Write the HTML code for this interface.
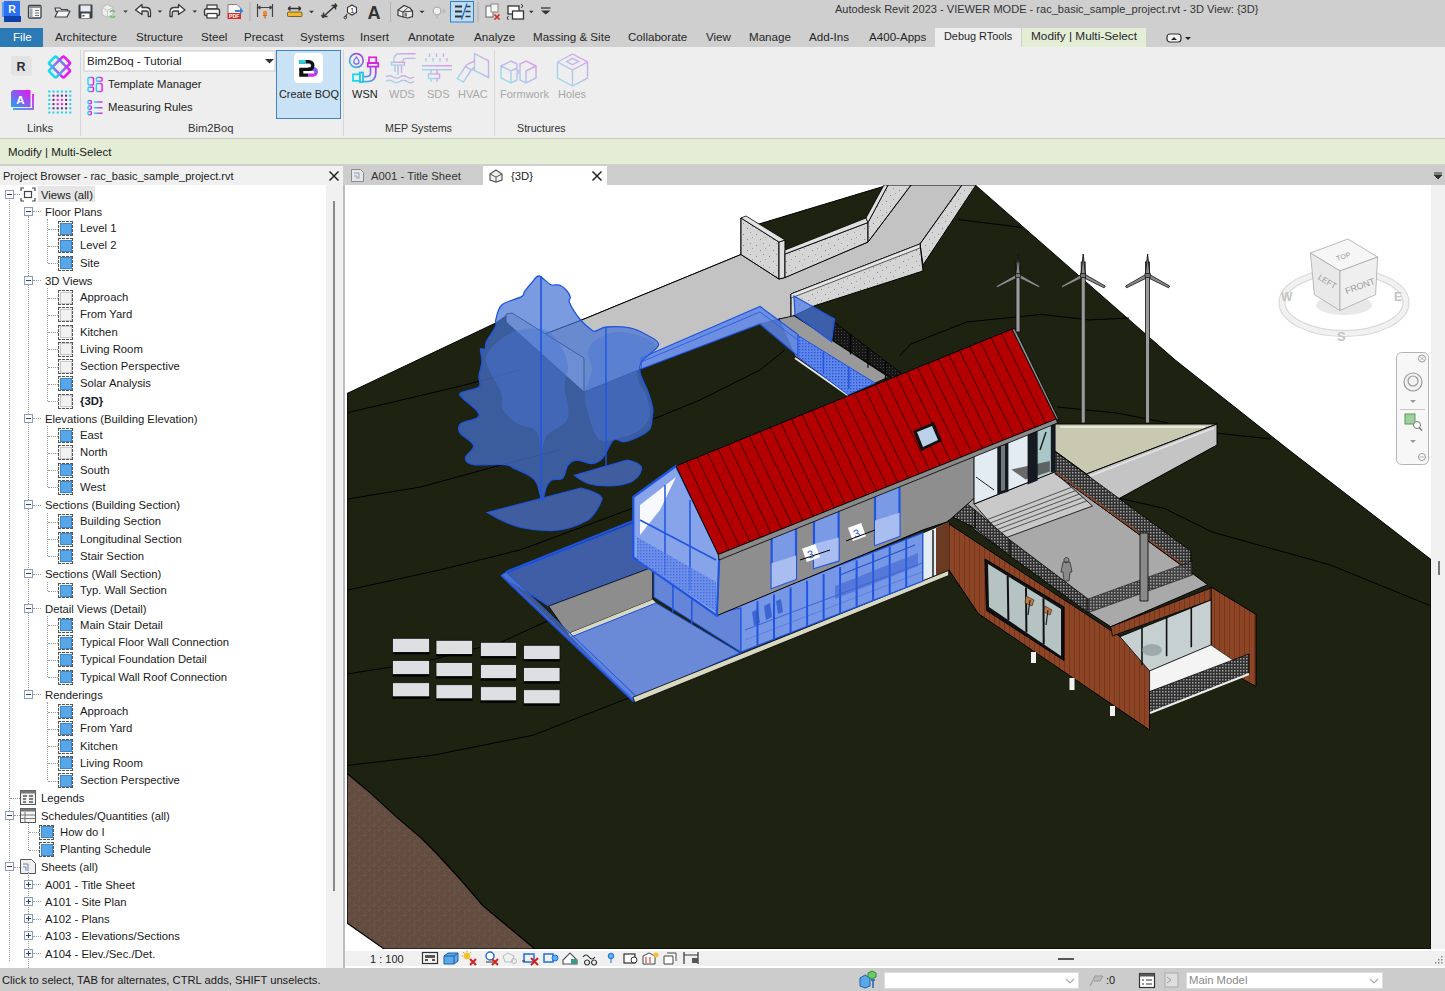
<!DOCTYPE html>
<html><head><meta charset="utf-8">
<style>
*{margin:0;padding:0;box-sizing:border-box}
html,body{width:1445px;height:991px;overflow:hidden;background:#cfcfcf;font-family:"Liberation Sans",sans-serif;font-size:11.3px;color:#1e1e1e}
.a{position:absolute;white-space:nowrap}
#title{left:0;top:0;width:1445px;height:28px;background:#cfcfcf}
#tabs{left:0;top:28px;width:1445px;height:19px;background:#cfcfcf}
.tab{position:absolute;top:29px;font-size:11.6px;color:#262626;line-height:15px}
#ribbon{left:0;top:47px;width:1445px;height:91px;background:#eeeeee}
#ctx{left:0;top:138px;width:1445px;height:26px;background:#e4eed7;border-top:1px solid #c6cbc0}
#pbhead{left:0;top:166px;width:343px;height:19px;background:#f0f0f0}
#pbtree{left:0;top:185px;width:326px;height:783px;background:#fff;overflow:hidden}
#pbscroll{left:326px;top:185px;width:17px;height:783px;background:#f0f0f0}
#vtabs{left:345px;top:166px;width:1100px;height:19px;background:#cdcdcd}
#vscroll{left:1431px;top:185px;width:14px;height:764px;background:#f0f0f0}
#vbar{left:345px;top:949px;width:1100px;height:19px;background:#f0f0f0;border-top:2px solid #fff;border-bottom:2px solid #fff}
#status{left:0;top:968px;width:1445px;height:23px;background:#cccccc;border-top:0}
.r{position:absolute;height:16px;line-height:16px;font-size:11.3px;color:#1a1a1a;white-space:nowrap}
.sep{position:absolute;top:50px;width:1px;height:86px;background:#d6d6d6}
.plab{position:absolute;top:121px;font-size:11.2px;color:#333;line-height:14px}
.btxt{position:absolute;top:87px;font-size:11px;line-height:14px;color:#222}
.dim{color:#a8a8a8}
.ln{position:absolute;border-left:1px dotted #9a9a9a}
.lh{position:absolute;border-top:1px dotted #9a9a9a}
.vw{position:absolute;width:15px;height:15px;border:1px dashed #555;background:#f4f4f4}
.vw.b::after{content:"";position:absolute;left:0.5px;top:0.5px;width:10px;height:10px;background:#57a6e8;border:1px solid #3f87c7}
.vw.e::after{content:"";position:absolute;left:0.5px;top:0.5px;width:10px;height:10px;background:#f2f2f2;border:1px solid #c9c9c9}
.ex{position:absolute;z-index:2;width:9px;height:9px;border:1px solid #8b9bbd;background:#fff}
.ex::before{content:"";position:absolute;left:1px;top:3px;width:5px;height:1px;background:#2b3f8f}
.ex.p::after{content:"";position:absolute;left:3px;top:1px;width:1px;height:5px;background:#2b3f8f}
</style></head><body>
<!-- Title bar -->
<div class="a" id="title"></div>
<svg class="a" style="left:0;top:0" width="330" height="28" viewBox="0 0 330 28">
 <rect x="2" y="2" width="3" height="15" fill="#5c9af5"/><rect x="4" y="1" width="16" height="16" fill="#2a70f0"/><rect x="4" y="16" width="17" height="6" fill="#0f41aa"/>
 <text x="8.2" y="12.8" font-family="Liberation Sans" font-weight="bold" font-size="10.5" fill="#fff">R</text>
 <rect x="28.5" y="5.5" width="12.5" height="12.5" rx="1" fill="#f4f4f4" stroke="#3a3f48" stroke-width="1.3"/><rect x="29" y="6" width="11.5" height="2" fill="#8a9098"/><rect x="29.5" y="8.5" width="3" height="9" fill="#a0a6ae"/><path d="M35 10.5 h4 M35 13 h4 M35 15.5 h4" stroke="#666" stroke-width="0.9"/>
 <path d="M55 8 h5 l1.5 1.5 h6 v2 h-11.5z" fill="#e8e8e8" stroke="#3a3f48" stroke-width="1.1"/><path d="M55 17 l3 -6 h12 l-3 6z" fill="#f4f4f4" stroke="#3a3f48" stroke-width="1.2" stroke-linejoin="round"/>
 <rect x="78.5" y="4.5" width="14" height="14" rx="1" fill="#3a4048"/><rect x="80.5" y="5.5" width="10" height="6" fill="#e8ecf0"/><rect x="81.5" y="13.5" width="8" height="4.5" fill="#fff"/><rect x="82.5" y="15" width="2" height="1.5" fill="#3a4048"/>
 <path d="M102 7.5 l5.5 -3 l5.5 3 v7 l-5.5 3 l-5.5 -3z" fill="#eeeeee" stroke="#b8b8b8" stroke-width="1"/><path d="M102 7.5 l5.5 3 l5.5 -3 M107.5 10.5 v7" stroke="#c4c4c4" fill="none"/><path d="M110 12 a3 3 0 0 1 5 0 M115 16 a3 3 0 0 1 -5 0" fill="none" stroke="#6ac46a" stroke-width="1.6"/>
 <path d="M123.3 10.5 h4.5 l-2.25 2.2z" fill="#333"/>
 <path d="M135.5 10 l6.5 -5.5 v3 h4 q4.5 0 4.5 4.5 v4.5 h-2.2 v-3.5 q0 -2 -2 -2 h-4.3 v3.5z" fill="#f4f4f4" stroke="#3a3a3a" stroke-width="1.3" stroke-linejoin="round"/>
 <path d="M157.6 10.5 h4.5 l-2.25 2.2z" fill="#333"/>
 <path d="M185 10 l-6.5 -5.5 v3 h-4 q-4.5 0 -4.5 4.5 v4.5 h2.2 v-3.5 q0 -2 2 -2 h4.3 v3.5z" fill="#f4f4f4" stroke="#3a3a3a" stroke-width="1.3" stroke-linejoin="round"/>
 <path d="M192.5 10.5 h4.5 l-2.25 2.2z" fill="#333"/>
 <rect x="207" y="5" width="10" height="4" fill="#f4f4f4" stroke="#3a3a3a" stroke-width="1.2"/><rect x="204.5" y="9" width="15" height="6.5" rx="1.5" fill="#f4f4f4" stroke="#3a3a3a" stroke-width="1.4"/><rect x="207" y="13.5" width="10" height="4.5" fill="#fff" stroke="#3a3a3a" stroke-width="1.2"/>
 <path d="M228 4.5 h9 l4 4 v5 h-13z" fill="#f6f6f6" stroke="#777" stroke-width="0.9"/><rect x="227.5" y="13" width="13.5" height="6" fill="#d62a22"/><text x="229" y="18.3" font-family="Liberation Sans" font-weight="bold" font-size="5.2" fill="#fff">PDF</text><path d="M235 10 h5 v-2 l3.5 3 l-3.5 3 v-2 h-5z" fill="#2f86e0"/>
 <line x1="250" y1="2" x2="250" y2="21" stroke="#b0b0b0"/>
 <path d="M257.5 4 v13 M272.5 4 v13 M258 7.5 h14 M258 7.5 l2.5 -1.5 M258 7.5 l2.5 1.5 M272 7.5 l-2.5 -1.5 M272 7.5 l-2.5 1.5" stroke="#444" stroke-width="1.2" fill="none"/><circle cx="265" cy="13" r="2.2" fill="#f08a24"/><path d="M263 15.5 h4 M265 15.5 v3" stroke="#d0601a" stroke-width="1.2"/>
</svg>
<svg class="a" style="left:280px;top:0" width="280" height="28" viewBox="280 0 280 28">
 <path d="M288 8.5 h13 M288 8.5 l2.5 -2 M288 8.5 l2.5 2 M301 8.5 l-2.5 -2 M301 8.5 l-2.5 2" stroke="#333" stroke-width="1.3" fill="none"/><rect x="287.5" y="12" width="14.5" height="4.5" rx="1" fill="#f2b829" stroke="#5a4a20" stroke-width="0.8"/>
 <path d="M309 10.7 h5 l-2.5 2.6z" fill="#333"/>
 <path d="M323.5 16.5 l12 -11 M323.5 16.5 v-4 M323.5 16.5 h4 M335.5 5.5 v4 M335.5 5.5 h-4 M321.5 15 l2 3 M335 3.5 l2 3" stroke="#333" stroke-width="1.4" fill="none"/>
 <path d="M352 5 l4.5 2.5 v5 l-4.5 2.5 l-4.5 -2.5 v-5z" fill="#f6f6f6" stroke="#333" stroke-width="1.1"/><text x="350.3" y="13" font-family="Liberation Sans" font-size="7" fill="#222">1</text><path d="M347 14 l-1.5 3" stroke="#333" stroke-width="1.1"/><circle cx="345.3" cy="17.5" r="1.3" fill="none" stroke="#333"/>
 <text x="367.5" y="18.5" font-size="18" font-weight="bold" font-family="Liberation Sans" fill="#333">A</text>
 <line x1="390.5" y1="2" x2="390.5" y2="22" stroke="#b0b0b0"/>
 <path d="M398 10 l6 -4.5 l6 2.5 l2.5 3 v5.5 l-5 1.5 l-9.5 -2.5z" fill="#eaeaea" stroke="#3a3a3a" stroke-width="1.2"/><path d="M398 10 l5 2 l4.5 -4 M403 12 v5.5 M403 12 l9.5 -1" stroke="#3a3a3a" stroke-width="1" fill="none"/><rect x="404.5" y="13" width="2.5" height="3.5" fill="#777"/>
 <path d="M419.5 10.7 h5 l-2.5 2.6z" fill="#333"/>
 <circle cx="437" cy="11" r="3.8" fill="#f0f0f0" stroke="#b0b0b0" stroke-width="1.3"/><path d="M441 11 h4 l-2 -2.5 M445 11 l-2 2.5 M437 15 v4" stroke="#b8b8b8" stroke-width="1.2" fill="none"/>
 <rect x="450.5" y="1.5" width="23" height="20.5" fill="#bcdcf4" stroke="#2f7fd0"/><path d="M455 6.5 h7 M455 11.5 h7 M455 16.5 h7" stroke="#333" stroke-width="2"/><path d="M465.5 6.5 h5 M465.5 11.5 h5 M465.5 16.5 h5" stroke="#333" stroke-width="1.3"/><path d="M461.5 19.5 l5.5 -16" stroke="#2a72d0" stroke-width="1.4"/>
 <line x1="478" y1="2" x2="478" y2="22" stroke="#b0b0b0"/>
 <rect x="486" y="6" width="7" height="11" fill="#fff" stroke="#666"/><rect x="491" y="4" width="7" height="8" fill="#f4f4f4" stroke="#888"/><path d="M494.5 14.5 l5 5 M499.5 14.5 l-5 5" stroke="#d62a2a" stroke-width="1.7"/>
 <rect x="508" y="6" width="11" height="8" fill="#fff" stroke="#333" stroke-width="1.3"/><rect x="512.5" y="11" width="11" height="8" fill="#fff" stroke="#333" stroke-width="1.3"/><path d="M521 4 l2 2 l-2 2 M508.5 16 l-1.5 2 l1.5 2" stroke="#333" fill="none"/>
 <path d="M529 10.7 h4.5 l-2.25 2.6z" fill="#333"/>
 <path d="M541 8 h9.5" stroke="#333" stroke-width="1.3"/><path d="M541 10.5 h9.5 l-4.75 4z" fill="#333"/>
</svg>
<div class="a" style="left:835px;top:2px;font-size:11.05px;color:#333;line-height:14px">Autodesk Revit 2023 - VIEWER MODE - rac_basic_sample_project.rvt - 3D View: {3D}</div>

<!-- Tabs -->
<div class="a" style="left:0;top:28px;width:43px;height:19px;background:#2b79b5"></div>
<div class="a tab" style="left:13px;color:#fff">File</div>
<div class="a" style="left:935px;top:28px;width:86px;height:19px;background:#eeeeee"></div>
<div class="a" style="left:1022px;top:28px;width:124px;height:19px;background:#e4eed7"></div>
<div class="a tab" style="left:55px">Architecture</div>
<div class="a tab" style="left:136px">Structure</div>
<div class="a tab" style="left:201px">Steel</div>
<div class="a tab" style="left:244px">Precast</div>
<div class="a tab" style="left:300px">Systems</div>
<div class="a tab" style="left:360px">Insert</div>
<div class="a tab" style="left:408px">Annotate</div>
<div class="a tab" style="left:474px">Analyze</div>
<div class="a tab" style="left:533px">Massing &amp; Site</div>
<div class="a tab" style="left:628px">Collaborate</div>
<div class="a tab" style="left:706px">View</div>
<div class="a tab" style="left:749px">Manage</div>
<div class="a tab" style="left:809px">Add-Ins</div>
<div class="a tab" style="left:869px">A400-Apps</div>
<div class="a tab" style="left:944px;font-size:10.9px">Debug RTools</div>
<div class="a tab" style="left:1031px;font-size:11.8px">Modify | Multi-Select</div>
<svg class="a" style="left:1165px;top:30px" width="30" height="16" viewBox="0 0 30 16"><rect x="2" y="4" width="14" height="8" rx="3" fill="#f4f4f4" stroke="#333" stroke-width="1.2"/><path d="M6 10 l3 -3 l3 3z" fill="#222"/><path d="M20 7 l3 3 l3 -3z" fill="#222"/></svg>

<!-- Ribbon -->
<div class="a" id="ribbon"></div>
<svg class="a" style="left:0;top:47px" width="600" height="90" viewBox="0 47 600 90">
 <rect x="12" y="57.5" width="20" height="18.5" rx="1" fill="#e6e6e6"/><rect x="11" y="56" width="20" height="18" rx="1" fill="#e3e3e3"/><text x="16.5" y="70.5" font-family="Liberation Sans" font-weight="bold" font-size="12.5" fill="#2a2e36">R</text>
 <defs>
  <linearGradient id="g1" x1="0" y1="1" x2="1" y2="0"><stop offset="0" stop-color="#1fd0e8"/><stop offset="1" stop-color="#c22de0"/></linearGradient>
  <linearGradient id="g1h" x1="0" y1="0" x2="1" y2="0"><stop offset="0" stop-color="#10e0f0"/><stop offset="1" stop-color="#f010f0"/></linearGradient>
  <linearGradient id="g2" x1="0" y1="1" x2="1" y2="0"><stop offset="0" stop-color="#20a8f0"/><stop offset="1" stop-color="#f010f0"/></linearGradient>
 </defs>
 <g fill="none" stroke="url(#g1h)" stroke-width="2.6"><rect x="49" y="62" width="21" height="10" rx="1.5" transform="rotate(45 59.5 67)"/><rect x="49" y="62" width="21" height="10" rx="1.5" transform="rotate(-45 59.5 67)"/></g>
 <path d="M13 108 h19 v-14 h2 v16 h-21z" fill="url(#g2)" opacity="0.9"/><path d="M11 92 l2 -2 h17.5 v17 h-19.5z" fill="url(#g2)"/><text x="16.3" y="104" font-family="Liberation Sans" font-weight="bold" font-size="11.5" fill="#fff">A</text>
 <rect x="48.3" y="90.5" width="2" height="2" fill="#1ad0f0"/><rect x="48.3" y="94.7" width="2" height="2" fill="#1ad0f0"/><rect x="48.3" y="98.9" width="2" height="2" fill="#1ad0f0"/><rect x="48.3" y="103.1" width="2" height="2" fill="#1ad0f0"/><rect x="48.3" y="107.3" width="2" height="2" fill="#1ad0f0"/><rect x="48.3" y="111.5" width="2" height="2" fill="#1ad0f0"/><rect x="52.5" y="90.5" width="2" height="2" fill="#1ad0f0"/><rect x="52.5" y="94.7" width="2" height="2" fill="#5a2a80"/><rect x="52.5" y="98.9" width="2" height="2" fill="#5a2a80"/><rect x="52.5" y="103.1" width="2" height="2" fill="#5a2a80"/><rect x="52.5" y="107.3" width="2" height="2" fill="#5a2a80"/><rect x="52.5" y="111.5" width="2" height="2" fill="#1ad0f0"/><rect x="56.7" y="90.5" width="2" height="2" fill="#1ad0f0"/><rect x="56.7" y="94.7" width="2" height="2" fill="#5a2a80"/><rect x="56.7" y="98.9" width="2" height="2" fill="#f020e8"/><rect x="56.7" y="103.1" width="2" height="2" fill="#f020e8"/><rect x="56.7" y="107.3" width="2" height="2" fill="#5a2a80"/><rect x="56.7" y="111.5" width="2" height="2" fill="#1ad0f0"/><rect x="60.9" y="90.5" width="2" height="2" fill="#1ad0f0"/><rect x="60.9" y="94.7" width="2" height="2" fill="#5a2a80"/><rect x="60.9" y="98.9" width="2" height="2" fill="#f020e8"/><rect x="60.9" y="103.1" width="2" height="2" fill="#f020e8"/><rect x="60.9" y="107.3" width="2" height="2" fill="#5a2a80"/><rect x="60.9" y="111.5" width="2" height="2" fill="#1ad0f0"/><rect x="65.1" y="90.5" width="2" height="2" fill="#1ad0f0"/><rect x="65.1" y="94.7" width="2" height="2" fill="#5a2a80"/><rect x="65.1" y="98.9" width="2" height="2" fill="#5a2a80"/><rect x="65.1" y="103.1" width="2" height="2" fill="#5a2a80"/><rect x="65.1" y="107.3" width="2" height="2" fill="#5a2a80"/><rect x="65.1" y="111.5" width="2" height="2" fill="#1ad0f0"/><rect x="69.3" y="90.5" width="2" height="2" fill="#1ad0f0"/><rect x="69.3" y="94.7" width="2" height="2" fill="#1ad0f0"/><rect x="69.3" y="98.9" width="2" height="2" fill="#1ad0f0"/><rect x="69.3" y="103.1" width="2" height="2" fill="#1ad0f0"/><rect x="69.3" y="107.3" width="2" height="2" fill="#1ad0f0"/><rect x="69.3" y="111.5" width="2" height="2" fill="#1ad0f0"/>
 <rect x="84" y="51" width="191" height="20" fill="#fff" stroke="#c8c8c8"/>
 <path d="M265 59 l4.5 4.5 l4.5 -4.5z" fill="#333"/>
 <g fill="none" stroke="url(#g1h)" stroke-width="1.4"><rect x="88" y="77.5" width="5.5" height="7.5" rx="1.2"/><rect x="96.3" y="77.5" width="5.8" height="3.6" rx="1.2"/><rect x="88" y="87.2" width="5.5" height="4.3" rx="1.2"/><rect x="96.3" y="83.5" width="5.8" height="8" rx="1.2"/></g>
 <g fill="none" stroke="url(#g1h)" stroke-width="1.4"><rect x="88" y="100.5" width="3.3" height="3.3" rx="1"/><rect x="88" y="106" width="3.3" height="3.3" rx="1"/><rect x="88" y="111.5" width="3.3" height="3.3" rx="1"/><path d="M94 102 h8.5 M94 107.7 h8.5 M94 113.2 h8.5"/></g>
 <line x1="80.5" y1="50" x2="80.5" y2="136" stroke="#d6d6d6"/>
 <rect x="276.5" y="50.5" width="64" height="68" fill="#c9e2f5" stroke="#3f84c4"/>
 <rect x="294" y="53" width="29" height="30" rx="4" fill="#fff"/>
 <defs><linearGradient id="g3" x1="0" y1="0" x2="0" y2="1"><stop offset="0" stop-color="#5a7ef0"/><stop offset="1" stop-color="#e020e0"/></linearGradient></defs>
 <path d="M308.2 66.9 H313.1 A4.9 4.9 0 0 1 313.1 76.7 H308.2 V73.4 H313.1 A1.2 1.2 0 0 0 313.1 71 H308.2 Z" fill="url(#g3)"/>
 <path d="M299.2 60 H309 A5.5 5.5 0 0 1 309 71 H303.3 V73.4 H308.2 V76.7 H299.2 V67.7 H309 A2.05 2.05 0 0 0 309 63.6 H299.2 Z" fill="#111"/>
 <rect x="299.2" y="60" width="6.6" height="3.6" fill="#1fd6e6"/>
 <line x1="343.5" y1="50" x2="343.5" y2="136" stroke="#d6d6d6"/>
 <circle cx="356.4" cy="60.5" r="6.8" fill="none" stroke="url(#g1)" stroke-width="1.7"/><path d="M356.4 57 q-2.6 3.3 -2.6 4.6 a2.6 2.6 0 0 0 5.2 0 q0 -1.3 -2.6 -4.6z" fill="none" stroke="#6a6ae8" stroke-width="1.2"/>
 <rect x="369" y="57.3" width="7.2" height="5.7" fill="none" stroke="#e020e0" stroke-width="1.7"/><rect x="367.8" y="63" width="10.5" height="3.6" fill="none" stroke="#d020e8" stroke-width="1.7"/>
 <path d="M370.5 66.6 v6.5 q0 3.5 -3.5 3.5 h-4 M375.8 66.6 v6.5 q0 8.6 -8.6 8.6 h-4.2" fill="none" stroke="url(#g1)" stroke-width="1.7"/>
 <rect x="359.8" y="72.5" width="3.2" height="9.5" fill="none" stroke="#20c0e8" stroke-width="1.7"/><rect x="353" y="74.3" width="6.8" height="6.6" fill="none" stroke="#10d8f0" stroke-width="1.7"/>
 <g opacity=".42" fill="none" stroke="url(#g1)" stroke-width="1.4">
  <path d="M415.6 53.7 h-15.5 q-6.3 0 -6.3 6.3 v2.5 M415.6 58.4 h-9.5 q-3.3 0 -3.3 3.3 v0.8"/><rect x="391.5" y="62.3" width="13" height="2.8"/><path d="M395 66 v6 M398 66 v9 M401.5 66 v7"/>
  <path d="M386 77 q3.5 -2.5 7 0 q3.5 2.5 7 0 q3.5 -2.5 7 0 q3.5 2.5 7 0 M386 81.5 q3.5 -2.5 7 0 q3.5 2.5 7 0 q3.5 -2.5 7 0 q3.5 2.5 7 0"/>
  <path d="M426 58 v3.5 M429.5 53.5 v3.5 M433 58 v3.5 M436.5 53.5 v3.5 M440 58 v3.5 M443.5 53.5 v3.5 M447 58 v3.5"/><path d="M422 65.8 h30 M422 69.8 h30"/><rect x="428.5" y="74" width="11" height="4.5"/><path d="M431 70 v4 M437 70 v4 M431 78.5 v3.5 M437 78.5 v3.5"/>
  <path d="M474.5 53.5 l14 7.5 v16.5 l-14 -7z"/><path d="M474.5 61 l-6 2.8 q-2 1 -3.2 2.8 l-8 12 l6 3.5 l8.3 -12.5 q1 -1.5 2.9 -2.3"/><path d="M465.3 66.6 l6 3.5 M474.5 70 l-2.5 0.1"/>
  <path d="M501 66 v12 l10 5 l6 -3 v-7 h3 v7 l6 3 l10 -5 v-12 l-10 -5 l-6 3 v7 h-3 v-7 l-6 -3z M501 66 l10 5 l6 -3 M526 71 l10 -5 M511 71 v12 M526 71 v12"/>
  <path d="M557.5 62 l15 -8 l15 8 v16 l-15 8 l-15 -8z M557.5 62 l15 8 l15 -8 M572.5 70 v16 M566.5 61.5 l6 -3.2 l6 3.2 l-6 3.2z"/>
 </g>
 <line x1="494.5" y1="50" x2="494.5" y2="136" stroke="#d6d6d6"/>
 
</svg>
<div class="a" style="left:87px;top:54px;font-size:11.5px;line-height:14px;color:#222">Bim2Boq - Tutorial</div>
<div class="a" style="left:108px;top:77px;font-size:11.3px;line-height:14px;color:#222">Template Manager</div>
<div class="a" style="left:108px;top:100px;font-size:11.3px;line-height:14px;color:#222">Measuring Rules</div>
<div class="a btxt" style="left:279px;font-size:10.9px">Create BOQ</div>
<div class="a btxt" style="left:352px">WSN</div>
<div class="a btxt dim" style="left:389px">WDS</div>
<div class="a btxt dim" style="left:427px">SDS</div>
<div class="a btxt dim" style="left:458px">HVAC</div>
<div class="a btxt dim" style="left:500px">Formwork</div>
<div class="a btxt dim" style="left:558px">Holes</div>
<div class="a plab" style="left:27px">Links</div>
<div class="a plab" style="left:188px">Bim2Boq</div>
<div class="a plab" style="left:385px;font-size:10.7px">MEP Systems</div>
<div class="a plab" style="left:517px;font-size:10.7px">Structures</div>

<!-- Context bar -->
<div class="a" id="ctx"></div>
<div class="a" style="left:8px;top:145px;font-size:11.5px;line-height:14px;color:#1a1a1a">Modify | Multi-Select</div>

<!-- Project browser -->
<div class="a" id="pbhead"></div>
<div class="a" style="left:3px;top:169px;font-size:11px;line-height:14px;color:#222">Project Browser - rac_basic_sample_project.rvt</div>
<svg class="a" style="left:327px;top:169px" width="14" height="14" viewBox="0 0 14 14"><path d="M2.5 2.5 l9 9 M11.5 2.5 l-9 9" stroke="#222" stroke-width="1.5"/></svg>
<div class="a" id="pbtree"></div>
<div class="a" id="pbscroll"></div>
<div class="a" style="left:333px;top:201px;width:2px;height:690px;background:#8a8a8a"></div>
<!--TREE-->
<div class="a" style="left:38px;top:186px;width:57px;height:16px;background:#e5e5e5"></div>
<div class="ln" style="left:9px;top:200px;height:761px"></div>
<div class="ex" style="left:5px;top:189.5px"></div>
<div class="lh" style="left:14px;top:194.0px;width:6px"></div>
<svg class="a" style="left:20px;top:186.5px" width="16" height="15" viewBox="0 0 16 15"><path d="M1 4 v-3 h3 M12 1 h3 v3 M15 11 v3 h-3 M4 14 h-3 v-3" stroke="#444" fill="none" stroke-width="1.2"/><rect x="4.5" y="4.5" width="7" height="6" fill="none" stroke="#444" stroke-width="1.2"/></svg>
<div class="r" style="left:41px;top:186.5px">Views (all)</div>
<div class="ex" style="left:24px;top:206.8px"></div>
<div class="lh" style="left:33px;top:211.2px;width:8px"></div>
<div class="r" style="left:45px;top:203.8px">Floor Plans</div>
<div class="lh" style="left:48px;top:228.5px;width:10px"></div>
<div class="vw b" style="left:58px;top:221.0px"></div>
<div class="r" style="left:80px;top:220.0px;">Level 1</div>
<div class="lh" style="left:48px;top:245.8px;width:10px"></div>
<div class="vw b" style="left:58px;top:238.2px"></div>
<div class="r" style="left:80px;top:237.2px;">Level 2</div>
<div class="lh" style="left:48px;top:263.0px;width:10px"></div>
<div class="vw b" style="left:58px;top:255.5px"></div>
<div class="r" style="left:80px;top:254.5px;">Site</div>
<div class="ex" style="left:24px;top:275.8px"></div>
<div class="lh" style="left:33px;top:280.2px;width:8px"></div>
<div class="r" style="left:45px;top:272.8px">3D Views</div>
<div class="lh" style="left:48px;top:297.5px;width:10px"></div>
<div class="vw e" style="left:58px;top:290.0px"></div>
<div class="r" style="left:80px;top:289.0px;">Approach</div>
<div class="lh" style="left:48px;top:314.8px;width:10px"></div>
<div class="vw e" style="left:58px;top:307.2px"></div>
<div class="r" style="left:80px;top:306.2px;">From Yard</div>
<div class="lh" style="left:48px;top:332.0px;width:10px"></div>
<div class="vw e" style="left:58px;top:324.5px"></div>
<div class="r" style="left:80px;top:323.5px;">Kitchen</div>
<div class="lh" style="left:48px;top:349.2px;width:10px"></div>
<div class="vw e" style="left:58px;top:341.8px"></div>
<div class="r" style="left:80px;top:340.8px;">Living Room</div>
<div class="lh" style="left:48px;top:366.5px;width:10px"></div>
<div class="vw e" style="left:58px;top:359.0px"></div>
<div class="r" style="left:80px;top:358.0px;">Section Perspective</div>
<div class="lh" style="left:48px;top:383.8px;width:10px"></div>
<div class="vw b" style="left:58px;top:376.2px"></div>
<div class="r" style="left:80px;top:375.2px;">Solar Analysis</div>
<div class="lh" style="left:48px;top:401.0px;width:10px"></div>
<div class="vw e" style="left:58px;top:393.5px"></div>
<div class="r" style="left:80px;top:392.5px;font-weight:bold;">{3D}</div>
<div class="ex" style="left:24px;top:413.8px"></div>
<div class="lh" style="left:33px;top:418.2px;width:8px"></div>
<div class="r" style="left:45px;top:410.8px">Elevations (Building Elevation)</div>
<div class="lh" style="left:48px;top:435.5px;width:10px"></div>
<div class="vw b" style="left:58px;top:428.0px"></div>
<div class="r" style="left:80px;top:427.0px;">East</div>
<div class="lh" style="left:48px;top:452.8px;width:10px"></div>
<div class="vw e" style="left:58px;top:445.2px"></div>
<div class="r" style="left:80px;top:444.2px;">North</div>
<div class="lh" style="left:48px;top:470.0px;width:10px"></div>
<div class="vw b" style="left:58px;top:462.5px"></div>
<div class="r" style="left:80px;top:461.5px;">South</div>
<div class="lh" style="left:48px;top:487.2px;width:10px"></div>
<div class="vw b" style="left:58px;top:479.8px"></div>
<div class="r" style="left:80px;top:478.8px;">West</div>
<div class="ex" style="left:24px;top:500.0px"></div>
<div class="lh" style="left:33px;top:504.5px;width:8px"></div>
<div class="r" style="left:45px;top:497.0px">Sections (Building Section)</div>
<div class="lh" style="left:48px;top:521.8px;width:10px"></div>
<div class="vw b" style="left:58px;top:514.2px"></div>
<div class="r" style="left:80px;top:513.2px;">Building Section</div>
<div class="lh" style="left:48px;top:539.0px;width:10px"></div>
<div class="vw b" style="left:58px;top:531.5px"></div>
<div class="r" style="left:80px;top:530.5px;">Longitudinal Section</div>
<div class="lh" style="left:48px;top:556.2px;width:10px"></div>
<div class="vw b" style="left:58px;top:548.8px"></div>
<div class="r" style="left:80px;top:547.8px;">Stair Section</div>
<div class="ex" style="left:24px;top:569.0px"></div>
<div class="lh" style="left:33px;top:573.5px;width:8px"></div>
<div class="r" style="left:45px;top:566.0px">Sections (Wall Section)</div>
<div class="lh" style="left:48px;top:590.8px;width:10px"></div>
<div class="vw b" style="left:58px;top:583.2px"></div>
<div class="r" style="left:80px;top:582.2px;">Typ. Wall Section</div>
<div class="ex" style="left:24px;top:603.5px"></div>
<div class="lh" style="left:33px;top:608.0px;width:8px"></div>
<div class="r" style="left:45px;top:600.5px">Detail Views (Detail)</div>
<div class="lh" style="left:48px;top:625.2px;width:10px"></div>
<div class="vw b" style="left:58px;top:617.8px"></div>
<div class="r" style="left:80px;top:616.8px;">Main Stair Detail</div>
<div class="lh" style="left:48px;top:642.5px;width:10px"></div>
<div class="vw b" style="left:58px;top:635.0px"></div>
<div class="r" style="left:80px;top:634.0px;">Typical Floor Wall Connection</div>
<div class="lh" style="left:48px;top:659.8px;width:10px"></div>
<div class="vw b" style="left:58px;top:652.2px"></div>
<div class="r" style="left:80px;top:651.2px;">Typical Foundation Detail</div>
<div class="lh" style="left:48px;top:677.0px;width:10px"></div>
<div class="vw b" style="left:58px;top:669.5px"></div>
<div class="r" style="left:80px;top:668.5px;">Typical Wall Roof Connection</div>
<div class="ex" style="left:24px;top:689.8px"></div>
<div class="lh" style="left:33px;top:694.2px;width:8px"></div>
<div class="r" style="left:45px;top:686.8px">Renderings</div>
<div class="lh" style="left:48px;top:711.5px;width:10px"></div>
<div class="vw b" style="left:58px;top:704.0px"></div>
<div class="r" style="left:80px;top:703.0px;">Approach</div>
<div class="lh" style="left:48px;top:728.8px;width:10px"></div>
<div class="vw b" style="left:58px;top:721.2px"></div>
<div class="r" style="left:80px;top:720.2px;">From Yard</div>
<div class="lh" style="left:48px;top:746.0px;width:10px"></div>
<div class="vw b" style="left:58px;top:738.5px"></div>
<div class="r" style="left:80px;top:737.5px;">Kitchen</div>
<div class="lh" style="left:48px;top:763.2px;width:10px"></div>
<div class="vw b" style="left:58px;top:755.8px"></div>
<div class="r" style="left:80px;top:754.8px;">Living Room</div>
<div class="lh" style="left:48px;top:780.5px;width:10px"></div>
<div class="vw b" style="left:58px;top:773.0px"></div>
<div class="r" style="left:80px;top:772.0px;">Section Perspective</div>
<div class="lh" style="left:10px;top:797.8px;width:10px"></div>
<svg class="a" style="left:20px;top:790.2px" width="16" height="15" viewBox="0 0 16 15"><rect x="0.5" y="0.5" width="15" height="14" fill="#f0f0f0" stroke="#555"/><rect x="0.5" y="0.5" width="15" height="3" fill="#777"/><path d="M3 6 h4 M9 6 h4 M3 9 h3 M9 9 h4 M3 12 h3 M9 12 h4" stroke="#555" stroke-width="1.3"/></svg>
<div class="r" style="left:41px;top:790.2px">Legends</div>
<div class="ex" style="left:5px;top:810.5px"></div>
<div class="lh" style="left:14px;top:815.0px;width:6px"></div>
<svg class="a" style="left:20px;top:807.5px" width="16" height="15" viewBox="0 0 16 15"><rect x="0.5" y="0.5" width="15" height="14" fill="#f4f4f4" stroke="#555"/><rect x="0.5" y="0.5" width="15" height="3" fill="#777"/><path d="M1 7 h14 M1 10.5 h14 M5 4 v10" stroke="#777"/></svg>
<div class="r" style="left:41px;top:807.5px">Schedules/Quantities (all)</div>
<div class="lh" style="left:29px;top:832.2px;width:10px"></div>
<div class="vw b" style="left:39px;top:824.8px"></div>
<div class="r" style="left:60px;top:823.8px;">How do I</div>
<div class="lh" style="left:29px;top:849.5px;width:10px"></div>
<div class="vw b" style="left:39px;top:842.0px"></div>
<div class="r" style="left:60px;top:841.0px;">Planting Schedule</div>
<div class="ex" style="left:5px;top:862.2px"></div>
<div class="lh" style="left:14px;top:866.8px;width:6px"></div>
<svg class="a" style="left:20px;top:859.2px" width="16" height="15" viewBox="0 0 16 15"><path d="M0.5 0.5 h11 l4 4 v10 h-15z" fill="#f0f0f0" stroke="#555"/><path d="M3 5 h5 v7 M3 8 h3 v4" stroke="#6a88b0" fill="none"/></svg>
<div class="r" style="left:41px;top:859.2px">Sheets (all)</div>
<div class="ex p" style="left:24px;top:879.5px"></div>
<div class="lh" style="left:33px;top:884.0px;width:8px"></div>
<div class="r" style="left:45px;top:876.5px">A001 - Title Sheet</div>
<div class="ex p" style="left:24px;top:896.8px"></div>
<div class="lh" style="left:33px;top:901.2px;width:8px"></div>
<div class="r" style="left:45px;top:893.8px">A101 - Site Plan</div>
<div class="ex p" style="left:24px;top:914.0px"></div>
<div class="lh" style="left:33px;top:918.5px;width:8px"></div>
<div class="r" style="left:45px;top:911.0px">A102 - Plans</div>
<div class="ex p" style="left:24px;top:931.2px"></div>
<div class="lh" style="left:33px;top:935.8px;width:8px"></div>
<div class="r" style="left:45px;top:928.2px">A103 - Elevations/Sections</div>
<div class="ex p" style="left:24px;top:948.5px"></div>
<div class="lh" style="left:33px;top:953.0px;width:8px"></div>
<div class="r" style="left:45px;top:945.5px">A104 - Elev./Sec./Det.</div>
<div class="ln" style="left:28px;top:216.2px;height:478.0px"></div>
<div class="ln" style="left:47px;top:219.2px;height:43.8px"></div>
<div class="ln" style="left:47px;top:288.2px;height:112.8px"></div>
<div class="ln" style="left:47px;top:426.2px;height:61.0px"></div>
<div class="ln" style="left:47px;top:512.5px;height:43.8px"></div>
<div class="ln" style="left:47px;top:581.5px;height:9.2px"></div>
<div class="ln" style="left:47px;top:616.0px;height:61.0px"></div>
<div class="ln" style="left:47px;top:702.2px;height:78.2px"></div>
<div class="ln" style="left:28px;top:823.0px;height:26.5px"></div>
<div class="ln" style="left:28px;top:871.8px;height:96.2px"></div>
<!--/TREE-->

<!-- View tabs -->
<div class="a" id="vtabs"></div>
<div class="a" style="left:483px;top:166px;width:124px;height:19px;background:#fff"></div>
<svg class="a" style="left:350px;top:168px" width="16" height="15" viewBox="0 0 16 15"><path d="M1.5 1.5 h9 l3 3 v9 h-12z" fill="#e6e6e6" stroke="#8a8a8a"/><path d="M4 5 h5 v6 M4 8 h3 v3" stroke="#8aa0c0" fill="none"/></svg>
<div class="a" style="left:371px;top:169px;font-size:11.3px;line-height:14px;color:#333">A001 - Title Sheet</div>
<svg class="a" style="left:488px;top:168px" width="16" height="15" viewBox="0 0 16 15"><path d="M2 6 l6 -4 l6 4 v6 l-6 2 l-6 -2z" fill="#f0f0f0" stroke="#555" stroke-width="1.2"/><path d="M2 6 l6 3 l6 -3 M8 9 v5" stroke="#555" fill="none"/></svg>
<div class="a" style="left:511px;top:169px;font-size:11.3px;line-height:14px;color:#222">{3D}</div>
<svg class="a" style="left:590px;top:169px" width="14" height="14" viewBox="0 0 14 14"><path d="M2.5 2.5 l9 9 M11.5 2.5 l-9 9" stroke="#222" stroke-width="1.5"/></svg>
<svg class="a" style="left:1432px;top:170px" width="12" height="12" viewBox="0 0 12 12"><path d="M2 3 h8 M2 5 l4 4 l4 -4z" stroke="#333" fill="#333"/></svg>

<!-- 3D View -->
<div class="a" style="left:343px;top:185px;width:2px;height:783px;background:#bdbdbd"></div>
<div class="a" style="left:345px;top:185px;width:2px;height:764px;background:#fff"></div>
<div id="view3d"><svg class="a" style="left:0;top:0" width="1445" height="991" viewBox="0 0 1445 991">
<defs><pattern id="brick" width="10" height="10" patternUnits="userSpaceOnUse"><rect width="10" height="10" fill="#6a5344"/><path d="M1 0 v5 M3 0 v5 M6 5 v5 M8 5 v5 M5 1 l5 2 M5 3 l5 2 M0 6 l5 2 M0 8 l5 2" stroke="#56423a" stroke-width="0.8"/></pattern><pattern id="conc" width="13" height="11" patternUnits="userSpaceOnUse"><rect width="13" height="11" fill="#d5d5d5"/><rect x="2" y="3" width="1" height="1" fill="#8a8a8a"/><rect x="9" y="1" width="1" height="1" fill="#9a9a9a"/><rect x="6" y="8" width="1" height="1" fill="#8a8a8a"/><rect x="11" y="6" width="1" height="1" fill="#a0a0a0"/></pattern><pattern id="mesh" width="3" height="3" patternUnits="userSpaceOnUse"><rect width="3" height="3" fill="#303030"/><rect x="1" y="1" width="1.5" height="1.5" fill="#a0a0a0"/></pattern><pattern id="bmesh" width="3" height="3" patternUnits="userSpaceOnUse"><rect width="3" height="3" fill="#6088ea"/><rect x="1" y="1" width="1.4" height="1.4" fill="#2a56d8"/></pattern><pattern id="mesh2" width="3" height="3" patternUnits="userSpaceOnUse"><rect width="3" height="3" fill="#161616"/><rect x="1" y="1" width="1" height="1" fill="#444"/></pattern><pattern id="wood" width="5" height="10" patternUnits="userSpaceOnUse"><rect width="5" height="10" fill="#8e4526"/><rect x="4" width="1" height="10" fill="#74371c"/></pattern><clipPath id="vc"><rect x="347" y="185" width="1084" height="764.5"/></clipPath></defs><g clip-path="url(#vc)">
<rect x="345" y="185" width="1086" height="764" fill="#fff"/>
<polygon points="347,393.5 495.7,323 506,316 545,334 580,320.7 741,254.5 741,218 759,224 888,185 975.3,185 1060,259.2 1175.2,360 1290,450.8 1431,559.5 1431,949 535,949 506,925 483,905.7 460,879 437,854 421.7,838.6 394.9,815.6 370,792.6 347,773.4" fill="#1e2311" stroke="#000" stroke-width="1" />
<polygon points="347,773.4 370,792.6 394.9,815.6 421.7,838.6 437,854 460,879 483,905.7 506,925 535,949 384,949 347,923" fill="url(#brick)" stroke="#000" stroke-width="1.2" />
<polyline points="348,412.6 461,386 520,370" fill="none" stroke="#000" stroke-width="1" />
<polyline points="348,499 420.7,487 509.5,462.7 560,450" fill="none" stroke="#000" stroke-width="1" />
<polyline points="348,590 441,569.7 521.6,549.5 630.6,509 680,490" fill="none" stroke="#000" stroke-width="1" />
<polyline points="348,673.8 420.7,662.5 501.4,642 554,618 640,590" fill="none" stroke="#000" stroke-width="1" />
<polyline points="348,765.4 432.8,755.3 533.7,735 626.5,698.8 700,670" fill="none" stroke="#000" stroke-width="1" />
<polyline points="652,419.6 700,400 760,370 784.8,350" fill="none" stroke="#000" stroke-width="1" />
<polyline points="958.8,219.6 1022,227.5" fill="none" stroke="#000" stroke-width="1" />
<polyline points="899.5,356 911,344 966.7,322 1041.7,314.4 1089,320 1129,318" fill="none" stroke="#000" stroke-width="1" />
<polyline points="1057.5,407 1117,413 1168,423" fill="none" stroke="#000" stroke-width="1" />
<polyline points="1215.6,433 1271,439" fill="none" stroke="#000" stroke-width="1" />
<polyline points="1112,496.6 1164.5,508.5 1212,532 1330.5,565 1431,606" fill="none" stroke="#000" stroke-width="1" />
<polygon points="506,316 545,334 580,320.7 741,254.5 779,279 784,277.6 868,242 911,185 962,185 920,244 791,294 791,317 779,319 760,324 641,369 584,392 506,322" fill="#c3c3c3" stroke="#000" stroke-width="1" />
<polygon points="741,218 779,242 779,279 741,254.5" fill="url(#conc)" stroke="#000" stroke-width="1" />
<polygon points="779,242 785,240 785,277.6 779,279" fill="#dedede" stroke="#000" stroke-width="1" />
<polygon points="741,218 746,216 785,240 779,242" fill="#e4e4e4" stroke="#000" stroke-width="0.8" />
<polygon points="785,254 868,222.5 868,242 785,277.6" fill="url(#conc)" stroke="#000" stroke-width="1" />
<polygon points="785,250 866,218 868,222.5 785,254" fill="#e0e0e0" stroke="#000" stroke-width="0.8" />
<polygon points="868,222.5 888,185 911,185 868,242" fill="url(#conc)" stroke="#000" stroke-width="1" />
<polygon points="866,218 884,185 888,185 868,222.5" fill="#e0e0e0" stroke="#000" stroke-width="0.8" />
<polygon points="962,185 976,185 923,265 920,244" fill="url(#conc)" stroke="#000" stroke-width="1" />
<polygon points="791,294 920,244 923,271 815,305.6 791,317" fill="url(#conc)" stroke="#000" stroke-width="1" />
<polygon points="791,294 920,244 920,248 791,298" fill="#e6e6e6" stroke="#000" stroke-width="0.6" />
<polygon points="779,319 794,315.8 888.5,377 849,394.7 795,356" fill="#9a9a9a" stroke="#000" stroke-width="0.8" />
<polyline points="795,358 849,396" fill="none" stroke="#e8e8e8" stroke-width="2" />
<polygon points="833,321 903,374.5 903,385 833,340.5" fill="url(#mesh2)" stroke="#000" stroke-width="0.8" />
<polyline points="850.5,334.4 850.5,354.4" fill="none" stroke="#000" stroke-width="1.2" />
<polyline points="868,347.8 868,367.8" fill="none" stroke="#000" stroke-width="1.2" />
<polyline points="885.5,361.1 885.5,381.1" fill="none" stroke="#000" stroke-width="1.2" />
<polygon points="641,358 760,306.4 798,334.5 798,356 760,324 641,369" fill="#5d86e6" stroke="#1f55e0" stroke-width="1.2" fill-opacity="0.85"/>
<polyline points="641,362 760,312 798,340" fill="none" stroke="#2f62e6" stroke-width="1" />
<polygon points="794,296 834.6,319 831.5,341.7 795,314.7" fill="#4a78e8" stroke="#1f55e0" stroke-width="1.2" fill-opacity="0.7"/>
<polygon points="798,335.5 875,383 848,394.7 798,357" fill="url(#bmesh)" stroke="#1f55e0" stroke-width="1" />
<polyline points="823.4,351.2 823.4,373.2" fill="none" stroke="#1f55e0" stroke-width="1.5" />
<polyline points="848.8,366.9 848.8,388.9" fill="none" stroke="#1f55e0" stroke-width="1.5" />
<rect x="392.5" y="638.3" width="37.1" height="14.1" fill="#dedfe2" stroke="#111" stroke-width="0.8"/>
<rect x="392.5" y="652.4" width="37.1" height="2" fill="#000"/>
<rect x="392.5" y="660.5" width="37.1" height="14.1" fill="#dedfe2" stroke="#111" stroke-width="0.8"/>
<rect x="392.5" y="674.6" width="37.1" height="2" fill="#000"/>
<rect x="392.5" y="682.7" width="37.1" height="14.1" fill="#dedfe2" stroke="#111" stroke-width="0.8"/>
<rect x="392.5" y="696.8" width="37.1" height="2" fill="#000"/>
<rect x="436" y="640.3" width="36.4" height="14.1" fill="#dedfe2" stroke="#111" stroke-width="0.8"/>
<rect x="436" y="654.4" width="36.4" height="2" fill="#000"/>
<rect x="436" y="662.5" width="36.4" height="14.1" fill="#dedfe2" stroke="#111" stroke-width="0.8"/>
<rect x="436" y="676.6" width="36.4" height="2" fill="#000"/>
<rect x="436" y="684.7" width="36.4" height="14.1" fill="#dedfe2" stroke="#111" stroke-width="0.8"/>
<rect x="436" y="698.8" width="36.4" height="2" fill="#000"/>
<rect x="480.4" y="642.3" width="36" height="14.1" fill="#dedfe2" stroke="#111" stroke-width="0.8"/>
<rect x="480.4" y="656.4" width="36" height="2" fill="#000"/>
<rect x="480.4" y="664.5" width="36" height="14.1" fill="#dedfe2" stroke="#111" stroke-width="0.8"/>
<rect x="480.4" y="678.6" width="36" height="2" fill="#000"/>
<rect x="480.4" y="686.7" width="36" height="14.1" fill="#dedfe2" stroke="#111" stroke-width="0.8"/>
<rect x="480.4" y="700.8" width="36" height="2" fill="#000"/>
<rect x="523.6" y="645.3" width="36.4" height="14.1" fill="#dedfe2" stroke="#111" stroke-width="0.8"/>
<rect x="523.6" y="659.4" width="36.4" height="2" fill="#000"/>
<rect x="523.6" y="667.5" width="36.4" height="14.1" fill="#dedfe2" stroke="#111" stroke-width="0.8"/>
<rect x="523.6" y="681.6" width="36.4" height="2" fill="#000"/>
<rect x="523.6" y="689.7" width="36.4" height="14.1" fill="#dedfe2" stroke="#111" stroke-width="0.8"/>
<rect x="523.6" y="703.8" width="36.4" height="2" fill="#000"/>
<polygon points="1055,424 1217,424 1086.5,474 1055,451" fill="#c9c9b2" stroke="#000" stroke-width="1" />
<polyline points="1060,427 1205,427" fill="none" stroke="#e8e8d8" stroke-width="2" />
<polygon points="1086.5,474 1217,424 1217,445 1114.6,501" fill="#c4c4c4" stroke="#000" stroke-width="1" />
<polyline points="1090,476 1214,428" fill="none" stroke="#e4e4e4" stroke-width="1.5" />
<polygon points="955,500 1054,468 1092,500 1207.7,584.7 1110.8,626.7 1085,610 975,530" fill="#a9a9a9" stroke="#000" stroke-width="1" />
<polygon points="974,504 1054.4,472 1092.5,506 1004,538.4" fill="#c9c9c9" stroke="#000" stroke-width="0.8" />
<polyline points="987.5,519.5 1071.5,487.3" fill="none" stroke="#333" stroke-width="0.8" />
<polyline points="990.5,522.9 1075.4,490.7" fill="none" stroke="#333" stroke-width="0.8" />
<polyline points="993.5,526.4 1079.2,494.1" fill="none" stroke="#333" stroke-width="0.8" />
<polyline points="996.5,529.8 1083,497.5" fill="none" stroke="#333" stroke-width="0.8" />
<polyline points="999.5,533.2 1086.8,500.9" fill="none" stroke="#333" stroke-width="0.8" />
<polygon points="1055,451.5 1190.8,551 1190.8,571.5 1055,473.8" fill="url(#mesh)" stroke="#000" stroke-width="0.8" />
<polyline points="1056,472 1190,570" fill="none" stroke="#8c4424" stroke-width="1.5" />
<polygon points="952,492.6 975,510 1010,540 1088,599 1088,612.7 1010,556 975,528 952,516.6" fill="url(#mesh)" stroke="#000" stroke-width="0.8" />
<polyline points="975,510 975,528" fill="none" stroke="#111" stroke-width="1.5" />
<polyline points="1010,540 1010,556" fill="none" stroke="#111" stroke-width="1.5" />
<polygon points="1088,599 1192.5,561 1192.5,575 1088,612.7" fill="url(#mesh)" stroke="#000" stroke-width="0.6" opacity="0.85"/>
<polygon points="1140,533 1148,533 1148,601 1140,601" fill="#8a8a8a" stroke="#000" stroke-width="0.8" />
<path d="M1066.5 557.5 a2.6 2.6 0 1 1 -0.1 0z M1063 562 h7 l2 10 h-2 l-1 9 h-5 l-1 -9 h-2z" fill="#8a8a8a" stroke="#222" stroke-width="0.7"/>
<path d="M1213 650 a2.4 2.4 0 1 1 -0.1 0z M1210 654 h6 l1.5 10 h-1.5 l-1 17 h-4 l-1 -17 h-1.5z" fill="#8a8a8a" stroke="#222" stroke-width="0.7"/>
<polygon points="946,522 1149.6,656 1149.6,730 978.4,613.7 948,568.5" fill="url(#wood)" stroke="#000" stroke-width="1" />
<polygon points="985,559 1064,607 1064,660.5 986.5,610.5" fill="#101010" stroke="#000" stroke-width="1" />
<polygon points="988,564 1061,609 1061,656 989,607" fill="#b6c3c3" stroke="none" stroke-width="1" />
<polyline points="1007.7,576.1 1008.4,620.2" fill="none" stroke="#111" stroke-width="2" />
<polyline points="1026,587.4 1026.4,632.5" fill="none" stroke="#111" stroke-width="2" />
<polyline points="1043.5,598.2 1043.7,644.2" fill="none" stroke="#111" stroke-width="2" />
<path d="M1026 596 l8 4 l-2 6 l-7 -3z M1045 606 l7 4 l-2 5 l-6 -3z" fill="#c07840" stroke="#222" stroke-width="0.6"/>
<polyline points="1030,600 1028,615" fill="none" stroke="#222" stroke-width="1.2" />
<polyline points="1048,610 1046,625" fill="none" stroke="#222" stroke-width="1.2" />
<rect x="1031" y="652" width="5" height="11" fill="#f2f2f2"/>
<rect x="1069.5" y="678" width="5" height="12" fill="#f2f2f2"/>
<rect x="1110" y="706" width="5" height="10" fill="#f2f2f2"/>
<polygon points="1211,587 1256,614.4 1256,686.4 1211,662" fill="url(#wood)" stroke="#000" stroke-width="1" />
<polygon points="1110.8,626.7 1211,588 1211,600 1112.4,636" fill="url(#wood)" stroke="#000" stroke-width="0.8" />
<polygon points="1120,636.7 1211,600 1211,645 1149.6,671" fill="#c6d0d0" stroke="#000" stroke-width="0.8" />
<polyline points="1142,625.2 1142,665.2" fill="none" stroke="#111" stroke-width="1.6" />
<polyline points="1166.6,616.2 1166.6,656.2" fill="none" stroke="#111" stroke-width="1.6" />
<polyline points="1191.3,607.2 1191.3,647.2" fill="none" stroke="#111" stroke-width="1.6" />
<ellipse cx="1152" cy="650" rx="10" ry="6" fill="#8a9a9a" opacity="0.7"/>
<polygon points="1149.6,671 1211,645 1249,671 1149.6,691.6" fill="#f4f4f4" stroke="#000" stroke-width="0.6" />
<polygon points="1149.6,691.6 1249,653.9 1249,674.5 1149.6,713.9" fill="url(#mesh)" stroke="#000" stroke-width="0.8" />
<polyline points="1150,713 1249,674" fill="none" stroke="#eee" stroke-width="2" />
<polygon points="922.7,533 948.7,522 948.7,570.4 922.7,581" fill="#e3edf3" stroke="#000" stroke-width="0.8" />
<polygon points="936,528 948.7,522 948.7,570.4 936,575" fill="#6b3a22" stroke="none" stroke-width="1" />
<polyline points="933,530 933,577" fill="none" stroke="#222" stroke-width="1.5" />
<polygon points="501.4,575.2 633.1,523.2 652.7,567.1 548.6,606.1" fill="#3f5ea6" stroke="#1f55e0" stroke-width="1.2" />
<polygon points="548.6,606.1 652.7,567.1 652.7,599.6 568,633.8" fill="#8d8d8d" stroke="#000" stroke-width="0.8" />
<polygon points="568,633.8 652.7,599.6 656,603 571,637" fill="#d8d8c0" stroke="none" stroke-width="1" />
<polygon points="571,637 656,603 740.5,653.3 633.1,700.5" fill="#6a89d6" stroke="#1f55e0" stroke-width="1" />
<polyline points="501.4,575.2 633.1,700.5 740.5,653.3" fill="none" stroke="#1f55e0" stroke-width="2.5" />
<polyline points="506,572 633.1,521" fill="none" stroke="#1f55e0" stroke-width="2" />
<polygon points="501.4,575.2 506,572 636,696 633.1,700.5" fill="#5a7fe0" stroke="#1f55e0" stroke-width="1" fill-opacity="0.6"/>
<polygon points="633,697.2 948.7,570.4 948.7,575.5 634.8,702.5" fill="#d9d9c2" stroke="#000" stroke-width="0.8" />
<polygon points="654,560 717,600 741,608 741,652 654,597" fill="#6585d8" stroke="#1f55e0" stroke-width="1" />
<polygon points="717.7,612.6 922.7,533 922.7,581 741,652 741,608" fill="#7696e6" stroke="#1f55e0" stroke-width="1.2" />
<polyline points="745,630 922,563" fill="none" stroke="#3a66dd" stroke-width="1" />
<polyline points="745,640 922,572" fill="none" stroke="#5a80e0" stroke-width="1" />
<polyline points="757.5,601.2 757.5,645.5" fill="none" stroke="#1f55e0" stroke-width="2" />
<polyline points="774,594.4 774,639.1" fill="none" stroke="#1f55e0" stroke-width="2" />
<polyline points="790.6,587.5 790.6,632.6" fill="none" stroke="#1f55e0" stroke-width="2" />
<polyline points="807.1,580.7 807.1,626.2" fill="none" stroke="#1f55e0" stroke-width="2" />
<polyline points="823.6,573.9 823.6,619.7" fill="none" stroke="#1f55e0" stroke-width="2" />
<polyline points="840.1,567.1 840.1,613.3" fill="none" stroke="#1f55e0" stroke-width="2" />
<polyline points="856.6,560.3 856.6,606.8" fill="none" stroke="#1f55e0" stroke-width="2" />
<polyline points="873.1,553.5 873.1,600.4" fill="none" stroke="#1f55e0" stroke-width="2" />
<polyline points="889.7,546.6 889.7,593.9" fill="none" stroke="#1f55e0" stroke-width="2" />
<polyline points="906.2,539.8 906.2,587.5" fill="none" stroke="#1f55e0" stroke-width="2" />
<path d="M752 612 l6 -3 l2 14 l-6 3z M764 606 l6 -3 l2 14 l-6 3z M776 601 l5 -2 l2 13 l-5 2z" fill="#2a55c8" opacity="0.75"/>
<polygon points="835,586 918,553 918,566 835,599" fill="#3a62d0" stroke="none" stroke-width="1" opacity="0.55"/>
<polyline points="840,575 915,545" fill="none" stroke="#2a55c8" stroke-width="1.2" />
<polyline points="672.9,572 672.9,612" fill="none" stroke="#1f55e0" stroke-width="1.5" />
<polyline points="691.8,584 691.8,624" fill="none" stroke="#1f55e0" stroke-width="1.5" />
<polygon points="719.3,555 975.6,451 975.6,497 950.7,519 946.7,522 922.7,530 717,615.6" fill="#8e8e8e" stroke="#000" stroke-width="1" />
<polygon points="974,448 1054.4,424 1054.4,472 974,504" fill="#e3ecf3" stroke="#000" stroke-width="1" />
<polygon points="1037.7,430.1 1050.8,426 1050.8,472.5 1037.7,478" fill="#a9c6c8" stroke="none" stroke-width="1" />
<polygon points="1011.4,469.5 1049.8,461 1049.8,471.5 1025.5,479.6" fill="#4a4a4a" stroke="none" stroke-width="1" opacity="0.8"/>
<polygon points="997.3,445.3 1008.4,442.2 1008.4,491.7 997.3,494.7" fill="#151a20" stroke="none" stroke-width="1" />
<polygon points="1001,446 1005,445 1005,490 1001,491" fill="#cfd8dc" stroke="none" stroke-width="1" opacity="0.5"/>
<polygon points="1027.6,433.2 1037.7,430.1 1037.7,480.6 1027.6,484.6" fill="#151a20" stroke="none" stroke-width="1" />
<polygon points="1050.8,425 1054.8,424 1054.8,471.5 1050.8,472.5" fill="#151a20" stroke="none" stroke-width="1" />
<polyline points="976,477 994,490" fill="none" stroke="#222" stroke-width="1" />
<polyline points="1040,450 1046,432" fill="none" stroke="#222" stroke-width="1.5" />
<polygon points="771.6,533 796,527 796,579 771.6,588" fill="#7b9ae6" stroke="#1f55e0" stroke-width="2.2" />
<polygon points="771.6,563.2 796,555.6 796,579 771.6,588" fill="#a9bdf0" stroke="none" stroke-width="1" />
<polygon points="814,515 838.6,509 838.6,560.6 814,568" fill="#7b9ae6" stroke="#1f55e0" stroke-width="2.2" />
<polygon points="814,544.1 838.6,537.4 838.6,560.6 814,568" fill="#a9bdf0" stroke="none" stroke-width="1" />
<polygon points="875,490.5 899.5,484.4 899.5,536 875,545" fill="#7b9ae6" stroke="#1f55e0" stroke-width="2.2" />
<polygon points="875,520.5 899.5,512.8 899.5,536 875,545" fill="#a9bdf0" stroke="none" stroke-width="1" />
<g transform="translate(811,553) rotate(-20)"><rect x="-7" y="-7" width="14" height="14" fill="#fff"/><text x="-4" y="5" font-family="Liberation Sans" font-size="11" fill="#1f55e0">3</text></g>
<g transform="translate(857,532) rotate(-20)"><rect x="-7" y="-7" width="14" height="14" fill="#fff"/><text x="-4" y="5" font-family="Liberation Sans" font-size="11" fill="#1f55e0">3</text></g>
<polyline points="800,560 830,550" fill="none" stroke="#000" stroke-width="1" />
<polyline points="846,541 875,530" fill="none" stroke="#000" stroke-width="1" />
<polygon points="633.3,497 676,466 719.3,555 716.9,615.6 633.3,557.5" fill="#87a4ea" stroke="#1f55e0" stroke-width="2.2" />
<polygon points="640,505 676,477 660,510 640,535" fill="#f7f9ff" stroke="none" stroke-width="1" />
<polyline points="640,520 716,560" fill="none" stroke="#1f55e0" stroke-width="1.5" />
<polyline points="665,485 665,575" fill="none" stroke="#1f55e0" stroke-width="1.5" />
<polyline points="690,500 690,590" fill="none" stroke="#1f55e0" stroke-width="1.5" />
<polygon points="637,537 716,582 716,612 637,560" fill="url(#bmesh)" stroke="none" stroke-width="1" opacity="0.7"/>
<polygon points="676,466 1012,329 1056.3,419 718.3,554.5" fill="#b40000" stroke="#000" stroke-width="1" />
<polyline points="686.5,461.7 728.9,550.3" fill="none" stroke="#1e0000" stroke-width="0.8" />
<polyline points="697,457.4 739.4,546" fill="none" stroke="#1e0000" stroke-width="0.8" />
<polyline points="707.5,453.2 750,541.8" fill="none" stroke="#1e0000" stroke-width="0.8" />
<polyline points="718,448.9 760.5,537.6" fill="none" stroke="#1e0000" stroke-width="0.8" />
<polyline points="728.5,444.6 771.1,533.3" fill="none" stroke="#1e0000" stroke-width="0.8" />
<polyline points="739,440.3 781.7,529.1" fill="none" stroke="#1e0000" stroke-width="0.8" />
<polyline points="749.5,436 792.2,524.9" fill="none" stroke="#1e0000" stroke-width="0.8" />
<polyline points="760,431.8 802.8,520.6" fill="none" stroke="#1e0000" stroke-width="0.8" />
<polyline points="770.5,427.5 813.4,516.4" fill="none" stroke="#1e0000" stroke-width="0.8" />
<polyline points="781,423.2 823.9,512.2" fill="none" stroke="#1e0000" stroke-width="0.8" />
<polyline points="791.5,418.9 834.5,507.9" fill="none" stroke="#1e0000" stroke-width="0.8" />
<polyline points="802,414.6 845,503.7" fill="none" stroke="#1e0000" stroke-width="0.8" />
<polyline points="812.5,410.3 855.6,499.5" fill="none" stroke="#1e0000" stroke-width="0.8" />
<polyline points="823,406.1 866.2,495.2" fill="none" stroke="#1e0000" stroke-width="0.8" />
<polyline points="833.5,401.8 876.7,491" fill="none" stroke="#1e0000" stroke-width="0.8" />
<polyline points="844,397.5 887.3,486.8" fill="none" stroke="#1e0000" stroke-width="0.8" />
<polyline points="854.5,393.2 897.9,482.5" fill="none" stroke="#1e0000" stroke-width="0.8" />
<polyline points="865,388.9 908.4,478.3" fill="none" stroke="#1e0000" stroke-width="0.8" />
<polyline points="875.5,384.7 919,474" fill="none" stroke="#1e0000" stroke-width="0.8" />
<polyline points="886,380.4 929.5,469.8" fill="none" stroke="#1e0000" stroke-width="0.8" />
<polyline points="896.5,376.1 940.1,465.6" fill="none" stroke="#1e0000" stroke-width="0.8" />
<polyline points="907,371.8 950.7,461.3" fill="none" stroke="#1e0000" stroke-width="0.8" />
<polyline points="917.5,367.5 961.2,457.1" fill="none" stroke="#1e0000" stroke-width="0.8" />
<polyline points="928,363.2 971.8,452.9" fill="none" stroke="#1e0000" stroke-width="0.8" />
<polyline points="938.5,359 982.4,448.6" fill="none" stroke="#1e0000" stroke-width="0.8" />
<polyline points="949,354.7 992.9,444.4" fill="none" stroke="#1e0000" stroke-width="0.8" />
<polyline points="959.5,350.4 1003.5,440.2" fill="none" stroke="#1e0000" stroke-width="0.8" />
<polyline points="970,346.1 1014,435.9" fill="none" stroke="#1e0000" stroke-width="0.8" />
<polyline points="980.5,341.8 1024.6,431.7" fill="none" stroke="#1e0000" stroke-width="0.8" />
<polyline points="991,337.6 1035.2,427.5" fill="none" stroke="#1e0000" stroke-width="0.8" />
<polyline points="1001.5,333.3 1045.7,423.2" fill="none" stroke="#1e0000" stroke-width="0.8" />
<polygon points="718.3,554.5 1056.3,419 1057.5,423 719,560" fill="#8a8a8a" stroke="#000" stroke-width="0.8" />
<polygon points="1012,329 1015,329 1059,420 1056.3,419" fill="#8a8a8a" stroke="#000" stroke-width="0.8" />
<polygon points="913,431 934,422 942,441 921,451" fill="#111" stroke="none" stroke-width="1" />
<polygon points="917,432 932,426 938,440 923,447" fill="#bcd0ea" stroke="none" stroke-width="1" />
<rect x="1016" y="262" width="4" height="70" fill="#9a9a9a" stroke="#111" stroke-width="0.8"/>
<path d="M1018 254 L1015.8 274 L1020.2 274z" fill="#8a8a8a" stroke="#111" stroke-width="0.9"/>
<path d="M1016 274.5 L996 286 L997 287.8 L1016 278.5z M1020 274.5 L1040 286 L1039 287.8 L1020 278.5z" fill="#8a8a8a" stroke="#111" stroke-width="0.8" stroke-linejoin="round"/>
<rect x="1015.5" y="273.5" width="5" height="4" fill="#777" stroke="#111" stroke-width="0.7"/>
<rect x="1081.2" y="262" width="4" height="161" fill="#9a9a9a" stroke="#111" stroke-width="0.8"/>
<path d="M1083.2 254 L1081 274 L1085.4 274z" fill="#8a8a8a" stroke="#111" stroke-width="0.9"/>
<path d="M1081.2 274.5 L1061.2 286 L1062.2 287.8 L1081.2 278.5z M1085.2 274.5 L1105.2 286 L1104.2 287.8 L1085.2 278.5z" fill="#8a8a8a" stroke="#111" stroke-width="0.8" stroke-linejoin="round"/>
<rect x="1080.7" y="273.5" width="5" height="4" fill="#777" stroke="#111" stroke-width="0.7"/>
<rect x="1145.6" y="262" width="4" height="161" fill="#9a9a9a" stroke="#111" stroke-width="0.8"/>
<path d="M1147.6 254 L1145.4 274 L1149.8 274z" fill="#8a8a8a" stroke="#111" stroke-width="0.9"/>
<path d="M1145.6 274.5 L1125.6 286 L1126.6 287.8 L1145.6 278.5z M1149.6 274.5 L1169.6 286 L1168.6 287.8 L1149.6 278.5z" fill="#8a8a8a" stroke="#111" stroke-width="0.8" stroke-linejoin="round"/>
<rect x="1145.1" y="273.5" width="5" height="4" fill="#777" stroke="#111" stroke-width="0.7"/>
<polygon points="506,314 512,313 584,358 584,392 506,322" fill="#cfcfcf" stroke="#000" stroke-width="0.8" />
<path d="M487.2 512.6 L580.8 488 Q604 494 601.7 500 Q596 514 588 520 Q570 530 551.7 530.7 Q530 530 519 527 Q502 522 487.2 512.6z" fill="#4a6fc8" fill-opacity="0.78" stroke="#1f55e0" stroke-width="1.2"/>
<path d="M574.4 475.3 L627 460 Q642 463 641.6 469 Q640 477 631.6 481.7 Q620 486 610 486 Q596 486 588 483.5 Q580 480 574.4 475.3z" fill="#4a6fc8" fill-opacity="0.78" stroke="#1f55e0" stroke-width="1.2"/>
<path d="M539.0 276.0 C542.0 276.4 547.1 283.0 550.5 284.5 C553.9 286.0 556.8 284.1 559.6 285.2 C562.4 286.3 565.4 289.3 567.2 291.3 C569.0 293.3 569.9 295.5 570.3 297.4 C570.7 299.3 567.9 299.0 569.5 302.7 C571.1 306.4 576.5 314.9 580.2 319.5 C583.9 324.1 589.0 328.1 591.6 330.0 C594.2 331.9 593.5 331.5 596.0 331.0 C598.5 330.5 601.2 327.5 606.8 327.0 C612.4 326.5 623.4 326.7 629.7 327.9 C636.1 329.1 640.1 331.2 644.9 334.0 C649.7 336.8 659.1 340.0 658.6 344.6 C658.1 349.2 644.8 356.6 641.8 361.4 C638.8 366.2 639.3 368.4 640.3 373.5 C641.3 378.6 646.0 386.2 648.0 391.8 C650.0 397.4 651.8 403.2 652.5 407.0 C653.2 410.8 653.0 410.8 652.5 414.5 C652.0 418.2 652.0 425.4 649.8 429.0 C647.5 432.6 643.2 434.2 639.0 436.3 C634.8 438.4 628.6 441.1 624.4 441.7 C620.1 442.3 617.1 437.3 613.5 440.0 C609.9 442.7 606.2 454.1 602.6 458.0 C599.0 461.9 596.0 463.2 591.7 463.5 C587.4 463.8 581.0 459.8 577.0 460.0 C573.0 460.2 570.4 462.0 568.0 465.0 C565.6 468.0 565.3 475.5 562.6 478.0 C559.9 480.5 554.4 478.5 551.7 480.0 C549.0 481.5 547.9 483.7 546.3 487.0 C544.7 490.3 543.5 500.6 542.0 500.0 C540.5 499.4 539.0 487.5 537.0 483.5 C535.0 479.5 533.6 478.4 530.0 476.0 C526.4 473.6 519.6 470.9 515.4 469.0 C511.1 467.1 511.5 465.2 504.5 464.5 C497.5 463.8 480.1 465.6 473.6 464.5 C467.1 463.4 465.4 461.2 465.4 458.0 C465.4 454.8 474.5 449.6 473.6 445.4 C472.7 441.2 462.1 436.3 460.0 432.7 C457.9 429.1 458.1 426.1 461.0 423.6 C463.9 421.2 474.5 420.1 477.2 418.0 C479.9 415.9 479.6 414.3 477.2 411.0 C474.8 407.7 465.4 401.1 462.7 398.0 C460.0 394.9 458.3 394.5 461.0 392.7 C463.7 390.9 476.0 389.8 479.0 387.0 C482.0 384.2 478.5 380.3 479.0 376.0 C479.5 371.7 481.8 365.9 482.0 361.4 C482.2 356.9 480.0 351.2 480.5 349.2 C481.0 347.2 484.0 350.5 485.0 349.2 C486.0 347.9 484.7 345.4 486.5 341.6 C488.3 337.8 494.2 329.9 495.7 326.3 C497.2 322.7 494.7 323.8 495.7 320.2 C496.7 316.6 497.5 308.9 501.8 305.0 C506.1 301.1 517.8 298.9 521.6 296.6 C525.4 294.3 522.8 293.7 524.6 291.3 C526.4 288.9 529.8 284.8 532.2 282.2 C534.6 279.6 536.0 275.6 539.0 276.0 Z" fill="#4874d4" stroke="#1f55e0" stroke-width="1.3" fill-opacity="0.72"/>
<path d="M486.0 360.0 C486.2 368.8 498.2 384.5 501.0 392.7 C503.8 400.9 500.0 403.9 502.7 409.0 C505.4 414.1 511.9 420.3 517.0 423.6 C522.1 426.9 529.9 426.6 533.6 429.0 C537.3 431.4 537.8 432.8 539.0 438.0 C540.2 443.2 539.8 460.3 541.0 460.0 C542.2 459.7 542.1 442.7 546.3 436.3 C550.5 429.9 562.4 427.0 566.0 421.8 C569.6 416.6 568.3 411.2 568.0 405.4 C567.7 399.6 564.4 393.7 564.4 387.0 C564.4 380.3 568.7 372.4 568.0 365.4 C567.3 358.4 563.8 350.9 560.0 345.0 C556.2 339.1 551.7 332.5 545.0 330.0 C538.3 327.5 527.5 328.3 520.0 330.0 C512.5 331.7 505.7 335.0 500.0 340.0 C494.3 345.0 485.8 351.2 486.0 360.0 Z" fill="#4874d4" stroke="none" stroke-width="1" fill-opacity="0.45"/>
<path d="M596.0 340.0 C600.5 336.7 607.7 332.7 615.0 332.0 C622.3 331.3 633.3 333.7 640.0 336.0 C646.7 338.3 655.0 341.7 655.0 346.0 C655.0 350.3 642.8 356.3 640.0 362.0 C637.2 367.7 637.0 374.5 638.0 380.0 C639.0 385.5 644.0 389.2 646.0 395.0 C648.0 400.8 651.0 409.2 650.0 415.0 C649.0 420.8 645.0 426.2 640.0 430.0 C635.0 433.8 626.7 436.3 620.0 438.0 C613.3 439.7 605.0 443.0 600.0 440.0 C595.0 437.0 592.5 427.5 590.0 420.0 C587.5 412.5 584.7 403.3 585.0 395.0 C585.3 386.7 591.5 377.2 592.0 370.0 C592.5 362.8 587.3 357.0 588.0 352.0 C588.7 347.0 591.5 343.3 596.0 340.0 Z" fill="#4874d4" stroke="none" stroke-width="1" fill-opacity="0.45"/>
<polyline points="541,276 541,500" fill="none" stroke="#1f55e0" stroke-width="1.6" />
<polyline points="606,327 606,467" fill="none" stroke="#1f55e0" stroke-width="1.4" />
<ellipse cx="1344" cy="302.5" rx="62" ry="31" fill="none" stroke="#d4d4d4" stroke-width="7"/>
<ellipse cx="1344" cy="302.5" rx="62" ry="31" fill="none" stroke="#f1f1f1" stroke-width="5"/>
<ellipse cx="1344" cy="305" rx="28" ry="10" fill="#e2e2e2" opacity="0.8"/>
<polygon points="1310.4,253 1348,239 1377.6,257 1340,271" fill="#f6f6f6" stroke="#a8a8a8" stroke-width="0.8" />
<polygon points="1310.4,253 1340,271 1340,310.5 1314.4,294.7" fill="#e9e9e9" stroke="#a8a8a8" stroke-width="0.8" />
<polygon points="1340,271 1377.6,257 1375.6,294.7 1340,310.5" fill="#efefef" stroke="#a8a8a8" stroke-width="0.8" />
<text x="1336" y="259" font-family="Liberation Sans" font-size="7" fill="#9a9a9a" transform="rotate(-18 1343 256)">TOP</text>
<text x="1318" y="283" font-family="Liberation Sans" font-size="8" fill="#9a9a9a" transform="rotate(30 1325 280)">LEFT</text>
<text x="1344" y="290" font-family="Liberation Sans" font-size="9" fill="#9a9a9a" transform="rotate(-20 1357 285)">FRONT</text>
<text x="1281" y="301" font-family="Liberation Sans" font-weight="bold" font-size="12" fill="#c4c4c4">W</text>
<text x="1394" y="301" font-family="Liberation Sans" font-weight="bold" font-size="12" fill="#c4c4c4">E</text>
<text x="1337" y="341" font-family="Liberation Sans" font-weight="bold" font-size="13" fill="#c4c4c4">S</text>
<rect x="1396.5" y="352.5" width="32" height="112" rx="5" fill="#f7f7f7" stroke="#b4b4b4"/>
<circle cx="1422" cy="358.5" r="3.5" fill="#fff" stroke="#999"/><path d="M1420 356.5 l4 4 M1424 356.5 l-4 4" stroke="#999" stroke-width="0.8"/>
<circle cx="1413" cy="382" r="9" fill="#f2f2f2" stroke="#999" stroke-width="1.2"/><circle cx="1413" cy="381" r="5" fill="none" stroke="#999" stroke-width="1.2"/>
<path d="M1410 400 l3 3 l3 -3z" fill="#999"/>
<line x1="1400" y1="409.5" x2="1425" y2="409.5" stroke="#c8c8c8"/>
<rect x="1405" y="414" width="10" height="10" fill="#9ed09e" stroke="#5a9a5a"/><circle cx="1417" cy="425" r="3.5" fill="#fff" stroke="#777"/><line x1="1419" y1="427.5" x2="1422" y2="430.5" stroke="#777" stroke-width="1.4"/>
<path d="M1410 440 l3 3 l3 -3z" fill="#999"/>
<circle cx="1422" cy="457" r="3.5" fill="#fff" stroke="#999"/><line x1="1419.5" y1="457" x2="1424.5" y2="457" stroke="#999" stroke-width="0.8"/>
</g>
</svg></div>
<div class="a" id="vscroll"></div>
<div class="a" style="left:1438px;top:561px;width:2px;height:14px;background:#777"></div>

<!-- View control bar -->
<div class="a" id="vbar"></div>
<div class="a" style="left:370px;top:952px;font-size:11px;line-height:14px;color:#222">1 : 100</div>
<div id="vbaricons"><svg class="a" style="left:415px;top:948px" width="300" height="20" viewBox="415 948 300 20">
<rect x="422.5" y="952.5" width="15" height="11" fill="#f4f4f4" stroke="#333" stroke-width="1.2"/><rect x="425" y="955" width="10" height="3" fill="#555"/><rect x="425" y="959" width="3" height="2" fill="#555"/><rect x="432" y="959" width="3" height="2" fill="#555"/>
<path d="M444 956 l4 -3 h10 v8 l-4 3 h-10z" fill="#5aa8e8" stroke="#1f5fa8"/><path d="M444 956 h10 l4 -3 M454 956 v8" stroke="#1f5fa8" fill="none"/>
<circle cx="467" cy="956" r="3.2" fill="#f3c12a"/><path d="M467 950.5 v2 M461.5 956 h2 M463 952 l1.4 1.4 M471 952 l-1.4 1.4" stroke="#e0a020"/><path d="M470 959 l6 6 M476 959 l-6 6" stroke="#d62020" stroke-width="2"/>
<circle cx="490" cy="956" r="4" fill="#fff" stroke="#1f6fd8" stroke-width="1.5"/><path d="M486 962 h7" stroke="#333"/><path d="M492 959 l6 6 M498 959 l-6 6" stroke="#d62020" stroke-width="2"/>
<path d="M503 956 l5 -3 l6 3 l-2 6 h-7z" fill="none" stroke="#bbb"/><circle cx="514" cy="961" r="2.5" fill="none" stroke="#bbb"/>
<rect x="524" y="954" width="10" height="8" fill="none" stroke="#1f6fd8" stroke-width="1.5"/><path d="M522 961 h3" stroke="#333"/><path d="M531 958 l7 7 M538 958 l-7 7" stroke="#d62020" stroke-width="2"/>
<rect x="544" y="954" width="9" height="8" fill="none" stroke="#1f6fd8" stroke-width="1.5"/><circle cx="555" cy="958" r="3" fill="#5ab0f0" stroke="#1f6fd8"/>
<path d="M563 960 l7 -7 l7 7 v4 h-14z" fill="#fff" stroke="#555" stroke-width="1.2"/><rect x="571" y="959" width="6" height="5" fill="#3a9a8a"/>
<path d="M583 957 q3 -4 6 0 q3 4 6 0 M587 960 a2.5 2.5 0 1 0 0.1 0 M594 960 a2.5 2.5 0 1 0 0.1 0" fill="none" stroke="#333" stroke-width="1.2"/>
<circle cx="611" cy="956" r="2.8" fill="#5ab0f0" stroke="#1f6fd8"/><path d="M611 959 v4" stroke="#1f6fd8"/>
<rect x="624" y="954" width="11" height="9" fill="#fff" stroke="#333" stroke-width="1.2"/><circle cx="634" cy="960" r="3" fill="#fff" stroke="#333"/>
<path d="M643 956 l6 -3 l6 3 v8 h-12z" fill="#fff" stroke="#444"/><path d="M646 957 v6 M650 957 v6" stroke="#d62020"/><circle cx="656" cy="955" r="2.5" fill="#f3c12a"/>
<path d="M664 956 h9 v8 h-9z M667 953 h9 v8" fill="#fff" stroke="#444"/>
<path d="M684 952 v12 M698 952 v12 M684 955 h14" stroke="#333" stroke-width="1.2"/><rect x="692" y="958" width="6" height="5" fill="#555"/>
</svg></div>
<div class="a" style="left:1058px;top:958px;width:16px;height:2px;background:#555"></div>
<svg class="a" style="left:1434px;top:955px" width="10" height="10" viewBox="0 0 10 10"><rect x="7" y="1" width="1.5" height="1.5" fill="#8a8a8a"/><rect x="4" y="4" width="1.5" height="1.5" fill="#8a8a8a"/><rect x="7" y="4" width="1.5" height="1.5" fill="#8a8a8a"/><rect x="1" y="7" width="1.5" height="1.5" fill="#8a8a8a"/><rect x="4" y="7" width="1.5" height="1.5" fill="#8a8a8a"/><rect x="7" y="7" width="1.5" height="1.5" fill="#8a8a8a"/></svg>

<!-- Status bar -->
<div class="a" id="status"></div>
<div class="a" style="left:2px;top:973px;font-size:11.2px;line-height:14px;color:#1a1a1a">Click to select, TAB for alternates, CTRL adds, SHIFT unselects.</div>
<div id="statusicons"><svg class="a" style="left:850px;top:968px" width="595" height="23" viewBox="850 968 595 23">
<path d="M860 978 l5 -3 l5 3 v8 l-5 2 l-5 -2z" fill="#5aa8e8" stroke="#1f5fa8"/><path d="M868 973 l4 -2 l4 2 v4 l-4 2 l-4 -2z" fill="#6acb6a" stroke="#2f8a2f"/><path d="M873 980 v8 M871 980 h4" stroke="#1f5fa8" stroke-width="1.4"/>
<rect x="884.5" y="972.5" width="194" height="16" fill="#fff" stroke="#dcdcdc"/>
<path d="M1066 979 l4 4 l4 -4" fill="none" stroke="#aaa" stroke-width="1.2"/>
<path d="M1090 986 l5 -10 h8 l-3 5 h-6" fill="#bbb" stroke="#999"/>
<rect x="1139.5" y="973.5" width="15" height="14" fill="#fff" stroke="#333" stroke-width="1.2"/><rect x="1139.5" y="973.5" width="15" height="3" fill="#555"/><path d="M1142 980 h2 M1146 980 h6 M1142 984 h2 M1146 984 h6" stroke="#333"/>
<rect x="1165" y="973" width="13" height="14" fill="#ddd" stroke="#aaa"/><path d="M1167 983 l4 -3 l-4 -3" stroke="#999" fill="none"/>
<rect x="1186.5" y="972.5" width="196" height="16" fill="#fff" stroke="#dcdcdc"/>
<path d="M1370 979 l4 4 l4 -4" fill="none" stroke="#aaa" stroke-width="1.2"/>

</svg>
<div class="a" style="left:1106px;top:973px;font-size:11px;line-height:14px;color:#222">:0</div>
<div class="a" style="left:1189px;top:973px;font-size:11.3px;line-height:14px;color:#8a8a8a">Main Model</div></div>
</body></html>
